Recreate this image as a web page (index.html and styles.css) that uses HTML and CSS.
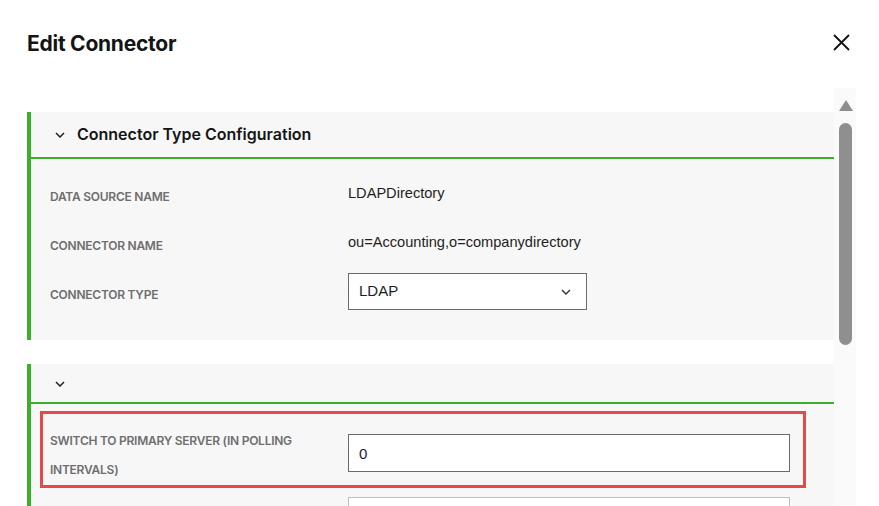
FILE: index.html
```html
<!DOCTYPE html>
<html lang="en">
<head>
<meta charset="utf-8">
<title>Edit Connector</title>
<link rel="stylesheet" href="styles.css">
</head>
<body>
<div class="modal">
  <header class="modal-header">
    <h1 class="title">Edit Connector</h1>
    <button class="close" aria-label="Close">
      <svg width="17" height="17" viewBox="0 0 17 17"><path d="M1 1 L16 16 M16 1 L1 16" stroke="#111" stroke-width="1.8" fill="none"/></svg>
    </button>
  </header>
  <div class="scroll-area">
    <div class="content">
      <section class="panel">
        <div class="panel-head tall">
          <svg class="chev" width="10" height="6" viewBox="0 0 10 6"><path d="M1 1 L5 5 L9 1" stroke="#222" stroke-width="1.5" fill="none"/></svg>
          <span class="panel-title">Connector Type Configuration</span>
        </div>
        <div class="panel-body first">
          <div class="row">
            <div class="label">DATA SOURCE NAME</div>
            <div class="value">LDAPDirectory</div>
          </div>
          <div class="row">
            <div class="label">CONNECTOR NAME</div>
            <div class="value">ou=Accounting,o=companydirectory</div>
          </div>
          <div class="row">
            <div class="label">CONNECTOR TYPE</div>
            <div class="select">
              <span>LDAP</span>
              <svg width="10" height="6" viewBox="0 0 10 6"><path d="M1 1 L5 5 L9 1" stroke="#333" stroke-width="1.4" fill="none"/></svg>
            </div>
          </div>
        </div>
      </section>
      <section class="panel second">
        <div class="panel-head short">
          <svg class="chev" width="10" height="6" viewBox="0 0 10 6"><path d="M1 1 L5 5 L9 1" stroke="#222" stroke-width="1.5" fill="none"/></svg>
        </div>
        <div class="panel-body">
          <div class="highlight">
            <div class="label wrap">SWITCH TO PRIMARY SERVER (IN POLLING INTERVALS)</div>
            <div class="input">0</div>
          </div>
          <div class="row-next">
            <div class="label"></div>
            <div class="input light"></div>
          </div>
        </div>
      </section>
    </div>
    <div class="scrollbar">
      <div class="arrow"></div>
      <div class="thumb"></div>
    </div>
  </div>
</div>
</body>
</html>
```
FILE: styles.css
```css
html, body {
  margin: 0;
  padding: 0;
  background: #fff;
  overflow: hidden;
  height: 506px;
}
.modal {
  width: 879px;
  height: 506px;
  display: flex;
  flex-direction: column;
  font-family: "Inter", "Liberation Sans", sans-serif;
  color: #1a1a1a;
}
.modal-header {
  height: 86px;
  margin-bottom: 2px;
  display: flex;
  align-items: center;
  justify-content: space-between;
  padding: 0 29px 0 27px;
  flex: none;
}
.title {
  margin: 0;
  font-size: 21px;
  font-weight: 700;
  letter-spacing: -0.25px;
  color: #141414;
}
.close {
  border: 0;
  background: none;
  padding: 0;
  width: 17px;
  height: 17px;
  display: flex;
  margin-top: -1px;
}
.scroll-area {
  flex: 1;
  display: flex;
  padding-left: 27px;
  min-height: 0;
}
.content {
  width: 807px;
  padding-top: 24px;
}
.panel {
  border-left: 4px solid #3bb02c;
  background: #f7f7f7;
}
.panel.second {
  margin-top: 24px;
}
.panel-head {
  display: flex;
  align-items: center;
  padding-left: 24px;
  border-bottom: 2px solid #3bb02c;
}
.panel-head.tall { height: 45px; }
.panel-head.short { height: 38px; }
.chev { flex: none; margin-top: 1px; }
.panel-title {
  margin-left: 12px;
  font-size: 16px;
  font-weight: 600;
  letter-spacing: 0;
  color: #151515;
  margin-top: -2px;
}
.panel-body {
  padding: 7px 28px 0 9px;
}
.panel-body.first {
  padding: 11px 0 23px 19px;
}
.row {
  height: 49px;
  display: flex;
  align-items: center;
}
.label {
  width: 270px;
  margin-right: 28px;
  flex: none;
  font-size: 12px;
  font-weight: 600;
  letter-spacing: -0.25px;
  line-height: 29px;
  color: #6e6e6e;
}
.row .label {
  margin-top: 4px;
}
.value {
  font-family: "Liberation Sans", Arial, sans-serif;
  font-size: 14.6px;
  color: #1e1e1e;
  margin-bottom: 3px;
}
.select {
  width: 239px;
  height: 37px;
  border: 1px solid #6a6a6a;
  background: #fff;
  display: flex;
  align-items: center;
  justify-content: space-between;
  padding: 0 15px 0 10px;
  box-sizing: border-box;
  margin-bottom: 2px;
  font-family: "Liberation Sans", Arial, sans-serif;
  font-size: 15px;
  color: #1e1e1e;
}
.select span { margin-top: -2px; }
.highlight {
  border: 3px solid #e34a48;
  display: flex;
  align-items: flex-start;
  padding: 12px 13px 1px 7px;
}
.highlight .input {
  margin-top: 8px;
}
.input {
  flex: 1;
  height: 38px;
  border: 1px solid #6a6a6a;
  background: #fff;
  box-sizing: border-box;
  display: flex;
  align-items: center;
  padding-left: 10px;
  font-family: "Liberation Sans", Arial, sans-serif;
  font-size: 15px;
  color: #1a1a3a;
}
.input.light {
  border-color: #bdbdbd;
}
.row-next {
  display: flex;
  margin-top: 9px;
  padding: 0 16px 0 10px;
}
.scrollbar {
  width: 22px;
  background: #fafafa;
  display: flex;
  flex-direction: column;
  align-items: center;
  padding-top: 12px;
}
.arrow {
  width: 0;
  height: 0;
  border-left: 7px solid transparent;
  border-right: 7px solid transparent;
  border-bottom: 11px solid #8e8e8e;
  margin-left: 1px;
}
.thumb {
  margin-top: 12px;
  width: 13px;
  height: 222px;
  border-radius: 7px;
  background: #8f8f8f;
  margin-left: 1px;
}
```
